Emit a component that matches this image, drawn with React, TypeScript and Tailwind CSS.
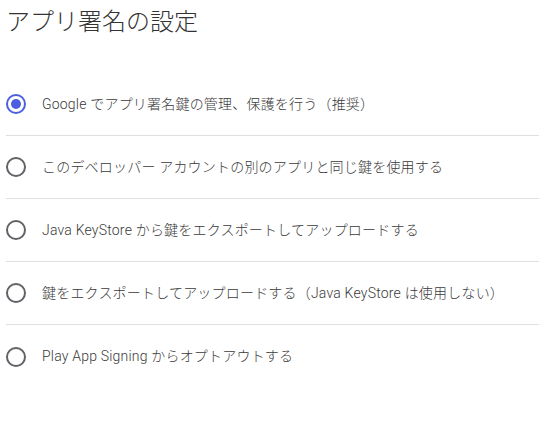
import React from "react";

const options = [
  "Google でアプリ署名鍵の管理、保護を行う（推奨）",
  "このデベロッパー アカウントの別のアプリと同じ鍵を使用する",
  "Java KeyStore から鍵をエクスポートしてアップロードする",
  "鍵をエクスポートしてアップロードする（Java KeyStore は使用しない）",
  "Play App Signing からオプトアウトする",
];

export default function App() {
  return (
    <div
      className="w-[539px] h-[421px] bg-white pl-[6px] overflow-hidden"
      style={{ fontFamily: 'Roboto, "Noto Sans CJK JP", sans-serif' }}
    >
      <div className="h-[44px] text-[24px] leading-[44px] text-[#333333] font-light">
        アプリ署名の設定
      </div>
      <div className="mt-[29px]">
        {options.map((t, i) => (
          <div
            key={i}
            className={`h-[63px] flex items-center gap-[16px] ${i < options.length - 1 ? "border-b border-[#e0e0e0]" : ""}`}
          >
            {i === 0 ? (
              <div className="w-[20px] h-[20px] rounded-full border-2 border-[#4c5fe0] flex items-center justify-center shrink-0">
                <div className="w-[10px] h-[10px] rounded-full bg-[#4c5fe0]" />
              </div>
            ) : (
              <div className="w-[20px] h-[20px] rounded-full border-2 border-[#5f6368] shrink-0" />
            )}
            <span className="text-[14px] font-light tracking-[0.2px] text-[#3a3a3a]">{t}</span>
          </div>
        ))}
      </div>
    </div>
  );
}
